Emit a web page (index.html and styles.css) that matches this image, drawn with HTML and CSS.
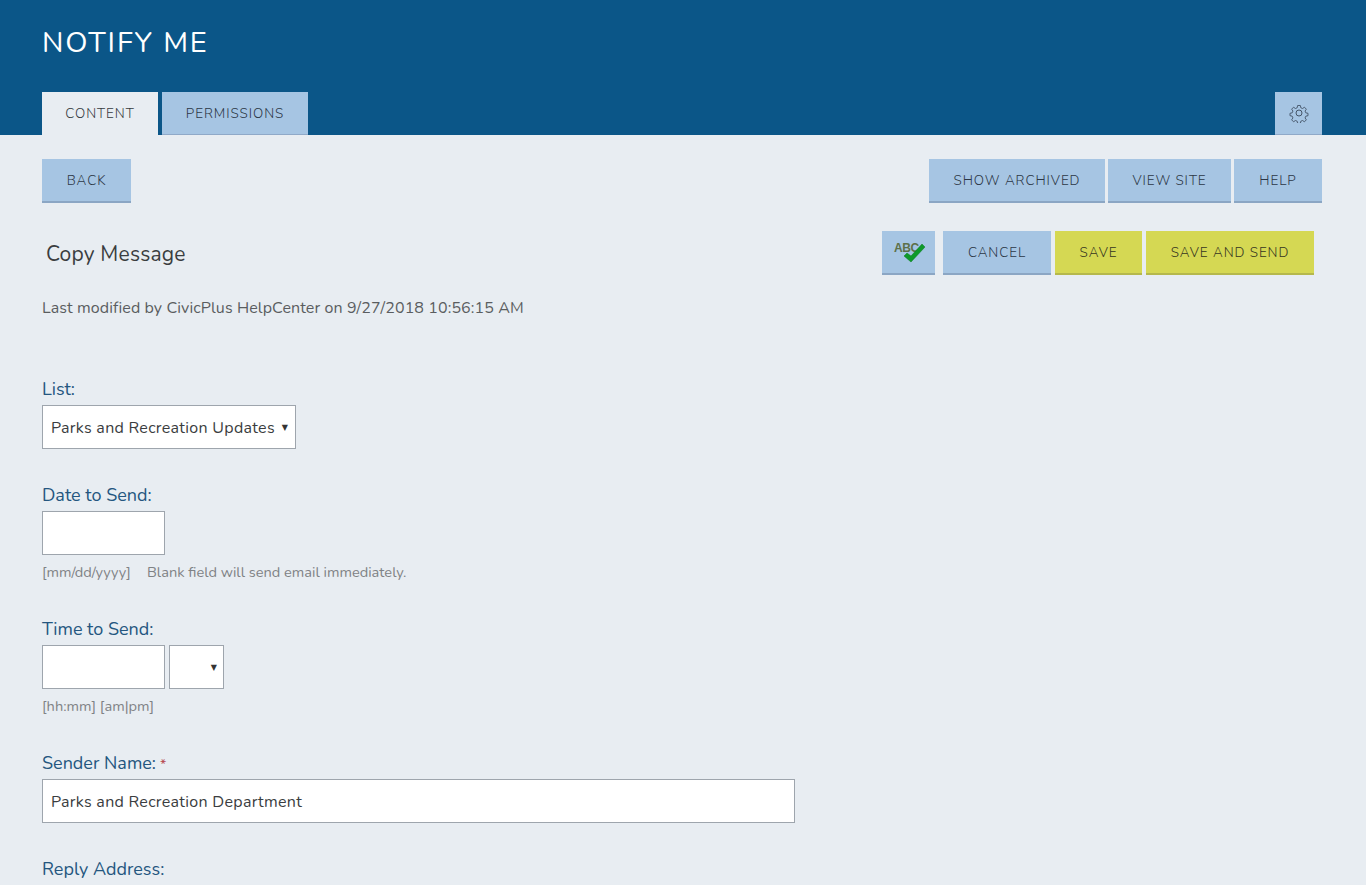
FILE: index.html
```html
<!DOCTYPE html>
<html lang="en">
<head>
    <meta charset="UTF-8">
    <meta name="viewport" content="width=device-width, initial-scale=1.0">
    <title>Notify Me</title>
    <link rel="stylesheet" href="styles.css">
</head>
<body>

    <!-- Page header with title and tabs -->
    <header class="header">
        <h1 class="title">NOTIFY ME</h1>
        <div class="tabs">
            <a class="tab tab-active">CONTENT</a>
            <a class="tab tab-permissions">PERMISSIONS</a>
            <a class="tab tab-gear">
                <svg width="20" height="20" viewBox="0 0 24 24" fill="none" stroke="#3c4a5c" stroke-width="1.1" stroke-linejoin="round">
                    <circle cx="12" cy="12" r="3.6"/>
                    <path d="M10.2 2h3.6l.6 3 2.3 1 2.6-1.7 2.5 2.6-1.7 2.5 1 2.4 2.9.6v3.2l-2.9.6-1 2.4 1.7 2.5-2.5 2.6-2.6-1.7-2.3 1-.6 2.9h-3.6l-.6-2.9-2.3-1-2.6 1.7-2.5-2.6 1.7-2.5-1-2.4-2.9-.6v-3.2l2.9-.6 1-2.4-1.7-2.5 2.5-2.6 2.6 1.7 2.3-1z" transform="translate(1.2 1.2) scale(.9)"/>
                </svg>
            </a>
        </div>
    </header>

    <main class="content">
        <div class="toolbar">
            <a class="btn btn-back">BACK</a>
            <div class="btn-group">
                <a class="btn btn-archived">SHOW ARCHIVED</a>
                <a class="btn btn-site">VIEW SITE</a>
                <a class="btn btn-help">HELP</a>
            </div>
        </div>

        <div class="message-head">
            <h2 class="message-title">Copy Message</h2>
            <div class="btn-group message-actions">
                <a class="btn btn-spell">
                    <span class="abc">ABC</span>
                    <svg class="check" width="24" height="20" viewBox="0 0 24 20">
                        <path d="M2 13l3-3 4 3L20 1l3 3L9 19z" fill="#0f9a2a" stroke="#0b7a20" stroke-width=".5"/>
                    </svg>
                </a>
                <a class="btn btn-cancel">CANCEL</a>
                <a class="btn btn-save">SAVE</a>
                <a class="btn btn-save btn-send">SAVE AND SEND</a>
            </div>
        </div>

        <p class="modified">Last modified by CivicPlus HelpCenter on 9/27/2018 10:56:15 AM</p>

        <!-- Message form -->
        <form class="form">
            <div class="field field-list">
                <label>List:</label>
                <div class="box box-list">Parks and Recreation Updates<span class="arrow">▼</span></div>
            </div>

            <div class="field field-date">
                <label>Date to Send:</label>
                <div class="box box-short"></div>
                <p class="hint">[mm/dd/yyyy]<span class="hint-gap">Blank field will send email immediately.</span></p>
            </div>

            <div class="field field-time">
                <label>Time to Send:</label>
                <div class="time-row">
                    <div class="box box-short"></div>
                    <div class="box box-ampm"><span class="arrow">▼</span></div>
                </div>
                <p class="hint">[hh:mm] [am|pm]</p>
            </div>

            <div class="field field-sender">
                <label>Sender Name:<span class="required">*</span></label>
                <div class="box box-wide">Parks and Recreation Department</div>
            </div>

            <div class="field">
                <label>Reply Address:</label>
            </div>
        </form>
    </main>

</body>
</html>
```

FILE: styles.css
```css
/* General page */
html, body {
    height: 885px;
    overflow: hidden;
}

body {
    margin: 0;
    background-color: #e8edf2;
    font-family: "Nunito", "Lato", "Open Sans", sans-serif;
    color: #3a3d40;
}

/* Header */
.header {
    background-color: #0b5688;
    height: 135px;
    padding: 0 44px 0 42px;
    box-sizing: border-box;
    display: flex;
    flex-direction: column;
    justify-content: space-between;
}

.title {
    margin: 0;
    padding-top: 25px;
    font-size: 29px;
    line-height: 36px;
    font-weight: 400;
    letter-spacing: 1.9px;
    color: #fff;
}

.tabs {
    display: flex;
    gap: 4px;
}

.tab {
    height: 43px;
    box-sizing: border-box;
    display: flex;
    align-items: center;
    justify-content: center;
    background-color: #a6c5e3;
    border-bottom: 1px solid #8fa9c8;
    font-size: 13.5px;
    font-weight: 300;
    letter-spacing: 0.95px;
    color: #2c3746;
}

.tab-active {
    width: 116px;
    background-color: #e8edf2;
    border-bottom: none;
    color: #363a3e;
}

.tab-permissions {
    width: 146px;
}

.tab-gear {
    width: 47px;
    margin-left: auto;
}

/* Buttons */
.btn {
    height: 44px;
    box-sizing: border-box;
    display: flex;
    align-items: center;
    justify-content: center;
    background-color: #a6c5e3;
    border-bottom: 2px solid #8ba6c4;
    font-size: 13.5px;
    font-weight: 300;
    letter-spacing: 0.95px;
    color: #2c3746;
}

.btn-group {
    display: flex;
    gap: 3px;
}

.btn-back { width: 89px; }
.btn-archived { width: 176px; }
.btn-site { width: 123px; }
.btn-help { width: 88px; }
.btn-cancel { width: 108px; }
.btn-save {
    width: 87px;
    background-color: #d5d853;
    border-bottom-color: #b5b84c;
    color: #35351f;
}
.btn-send { width: 168px; }

.btn-spell {
    width: 53px;
    position: relative;
    margin-right: 4px;
}

.abc {
    position: absolute;
    left: 12px;
    top: 10px;
    font-family: "Liberation Sans", Arial, sans-serif;
    font-size: 12px;
    font-weight: 700;
    letter-spacing: -0.4px;
    color: #5d7049;
}

.check {
    position: absolute;
    left: 20px;
    top: 12px;
}

/* Content */
.content {
    padding: 24px 44px 0 42px;
}

.toolbar {
    display: flex;
    justify-content: space-between;
}

.message-head {
    display: flex;
    justify-content: space-between;
    margin-top: 28px;
    padding-right: 8px;
}

.message-title {
    margin: 0;
    padding: 8px 0 0 4px;
    font-size: 21px;
    line-height: 30px;
    font-weight: 400;
    letter-spacing: 0.2px;
    color: #3a3d40;
}

.message-actions {
    gap: 4px;
}

.modified {
    margin: 22px 0 0;
    font-size: 16px;
    line-height: 22px;
    letter-spacing: 0.1px;
    color: #5a5d60;
}

/* Form */
.form {
    margin-top: 58px;
}

.field label {
    display: block;
    height: 28px;
    font-size: 18px;
    line-height: 24px;
    color: #24567f;
}

.field-list { height: 106px; }
.field-date { height: 134px; }
.field-time { height: 134px; }
.field-sender { height: 106px; }

.box {
    height: 44px;
    box-sizing: border-box;
    background-color: #fff;
    border: 1px solid #9ea5ad;
    padding: 1px 7px 0 8px;
    display: flex;
    align-items: center;
    justify-content: space-between;
    font-size: 16px;
    letter-spacing: 0.29px;
    color: #3a3d40;
}

.box-list { width: 254px; }
.box-short { width: 123px; }
.box-ampm { width: 55px; justify-content: flex-end; padding: 0 6px; }
.box-wide { width: 753px; }

.arrow {
    font-family: "DejaVu Sans", sans-serif;
    font-size: 8px;
    letter-spacing: 0;
    color: #333;
}

.time-row {
    display: flex;
    gap: 4px;
}

.hint {
    margin: 6px 0 0;
    font-size: 14.6px;
    line-height: 22px;
    color: #7f8285;
}

.hint-gap {
    margin-left: 16px;
}

.required {
    margin-left: 4px;
    font-size: 14px;
    color: #b5484e;
}
```
